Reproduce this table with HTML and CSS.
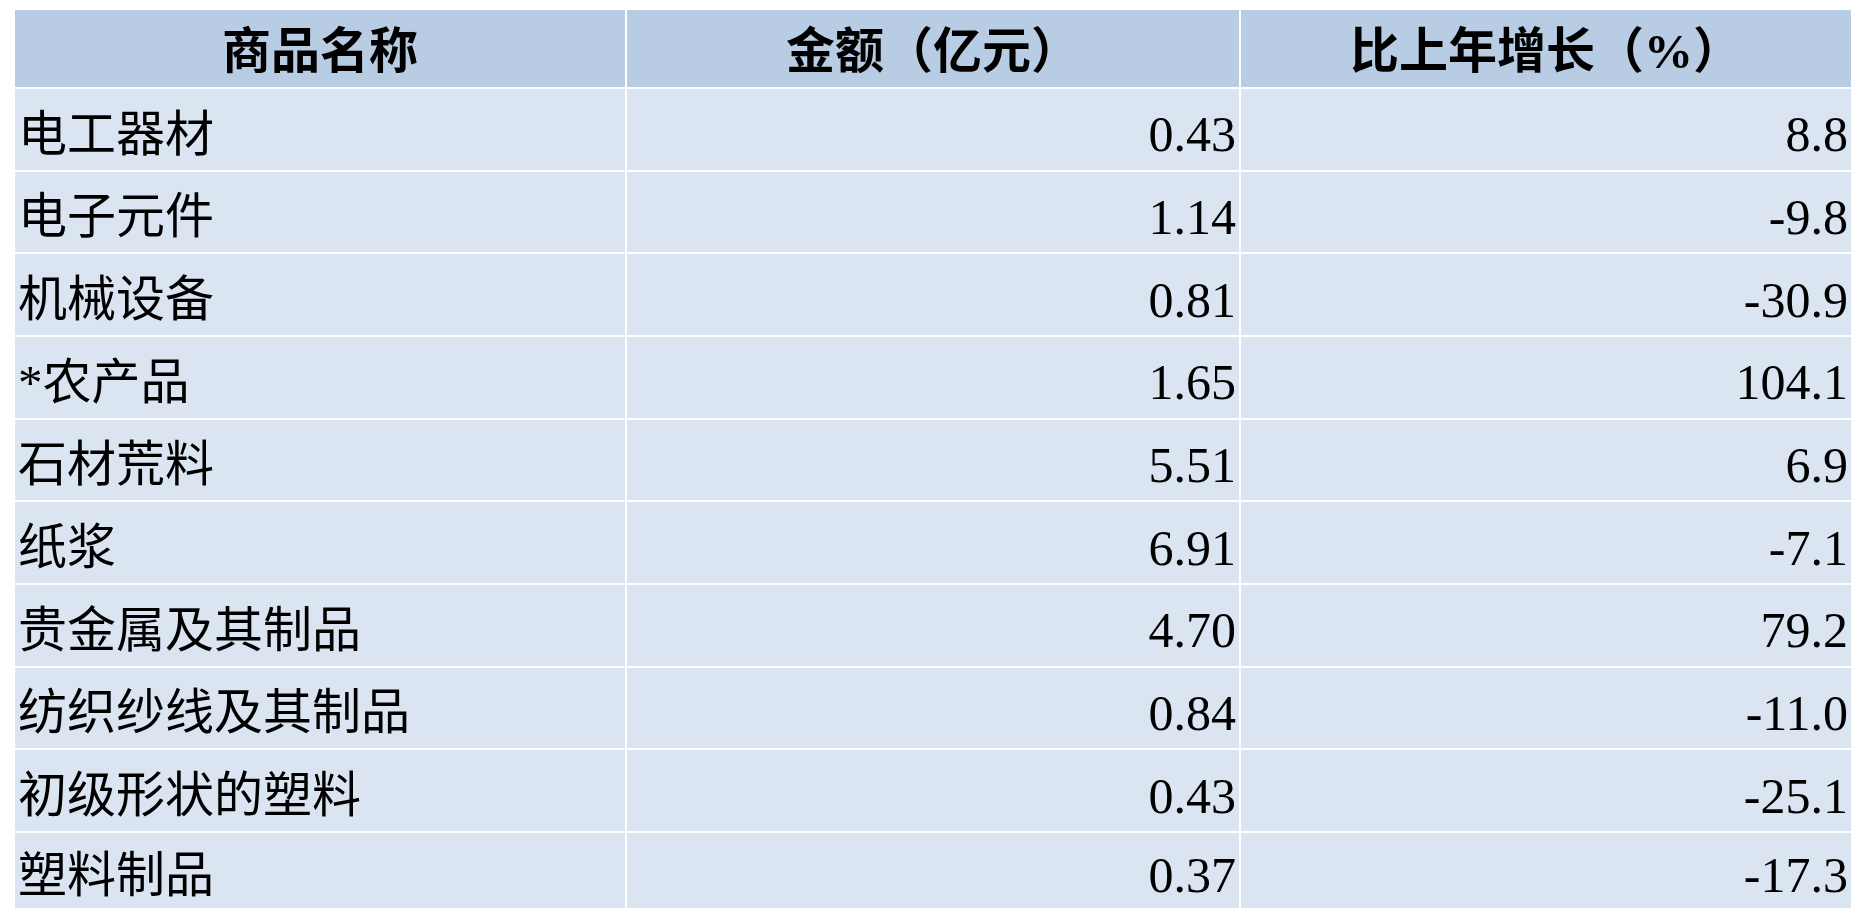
FILE: index.html
```html
<!DOCTYPE html>
<html lang="zh-CN">
<head>
<meta charset="utf-8">
<title>商品进口表</title>
<link rel="stylesheet" href="styles.css">
</head>
<body>
<div class="table">
  <div class="cell head">商品名称</div>
  <div class="cell head">金额（亿元）</div>
  <div class="cell head">比上年增长（%）</div>

  <div class="cell name">电工器材</div>
  <div class="cell num">0.43</div>
  <div class="cell num">8.8</div>

  <div class="cell name">电子元件</div>
  <div class="cell num">1.14</div>
  <div class="cell num">-9.8</div>

  <div class="cell name">机械设备</div>
  <div class="cell num">0.81</div>
  <div class="cell num">-30.9</div>

  <div class="cell name">*农产品</div>
  <div class="cell num">1.65</div>
  <div class="cell num">104.1</div>

  <div class="cell name">石材荒料</div>
  <div class="cell num">5.51</div>
  <div class="cell num">6.9</div>

  <div class="cell name">纸浆</div>
  <div class="cell num">6.91</div>
  <div class="cell num">-7.1</div>

  <div class="cell name">贵金属及其制品</div>
  <div class="cell num">4.70</div>
  <div class="cell num">79.2</div>

  <div class="cell name">纺织纱线及其制品</div>
  <div class="cell num">0.84</div>
  <div class="cell num">-11.0</div>

  <div class="cell name">初级形状的塑料</div>
  <div class="cell num">0.43</div>
  <div class="cell num">-25.1</div>

  <div class="cell name">塑料制品</div>
  <div class="cell num">0.37</div>
  <div class="cell num">-17.3</div>
</div>
</body>
</html>
```

FILE: styles.css
```css
html, body {
  margin: 0;
  padding: 0;
  background: #ffffff;
  overflow: hidden;
}

.table {
  margin: 10px 0 0 15px;
  width: 1836px;
  display: grid;
  grid-template-columns: 610px 612px 610px;
  grid-template-rows: 77px repeat(9, 80.67px) 75px;
  gap: 2px;
  font-family: "Liberation Serif", "Noto Sans CJK SC", serif;
  color: #000000;
}

.cell {
  display: flex;
  align-items: center;
  font-size: 49px;
  line-height: 1;
  background: #dbe5f1;
  box-sizing: border-box;
  white-space: nowrap;
}

.head {
  background: #b8cce4;
  justify-content: center;
  font-weight: bold;
  font-size: 49px;
  padding-top: 6px;
}

.name {
  justify-content: flex-start;
  padding-left: 3px;
  padding-top: 10px;
}

.num {
  justify-content: flex-end;
  padding-right: 3px;
  padding-top: 10px;
  font-size: 50px;
}
```
